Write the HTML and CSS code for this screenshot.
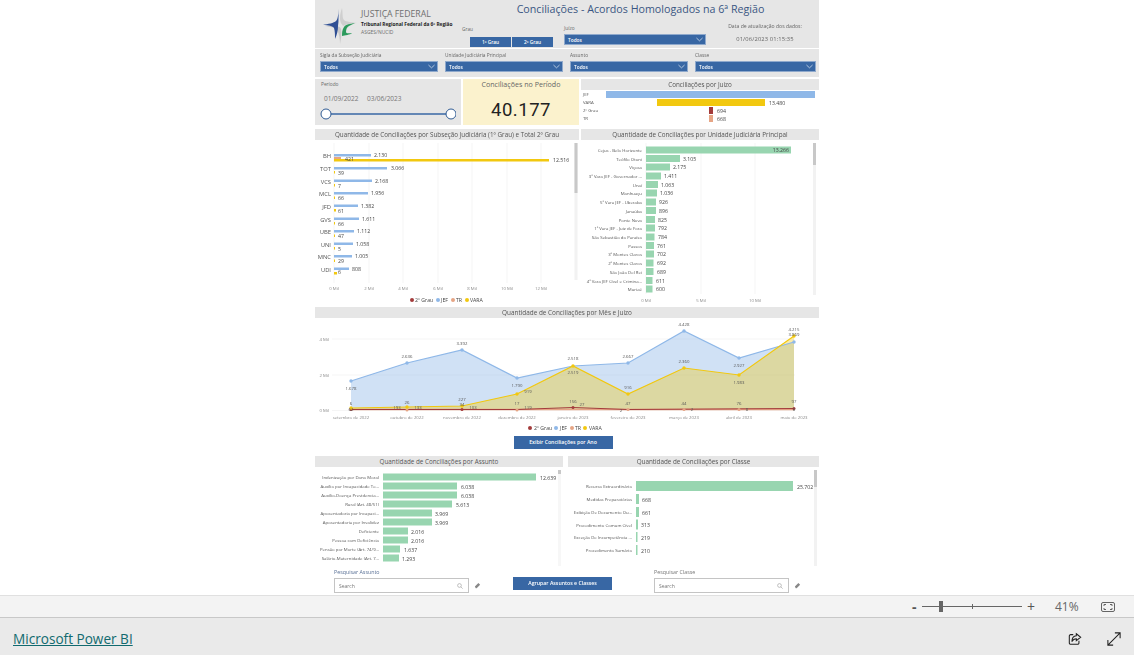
FILE: index.html
```html
<!DOCTYPE html>
<html lang="pt-BR">
<head>
<meta charset="utf-8">
<title>Conciliações - Power BI</title>
<link rel="stylesheet" href="styles.css">
</head>
<body>
<div class="page">
<main class="stage">
<div class="report">

<header class="hdr">
  <div class="brand">
    <svg class="logo" viewBox="323 8 36 36">
      <path fill="#cfcfcf" d="M342 8c1 5 0 10 2 12 2 2 8 2 13 3-6 1-11 1-14 3-1-2-3-3-3-8 0-4 1-7 2-10z"/>
      <path fill="#c8c8c8" d="M325 26c5 1 10 1 12 4 2 3 3 9 3 14 1-5 2-11 1-15-1-3-4-3-8-3z"/>
      <path fill="#2f4f94" d="M339 9c-1 6-1 10-3 12-2 2-8 3-13 4 5 0 10 1 11 3 1 3 1 7 1 11 2-4 3-9 3-13 1-5 0-11 1-17z"/>
      <path fill="#2c9a5c" d="M355 23c-5 1-9 1-11 4-2 3-2 6-2 9 3-1 8-1 10-3-2 0-6 1-6-1 0-3 1-5 3-6 2-1 4-2 6-3z"/>
    </svg>
    <div class="brand-text">
      <div class="brand-name">JUSTIÇA FEDERAL</div>
      <div class="brand-court">Tribunal Regional Federal da 6ª Região</div>
      <div class="brand-unit">ASGES/NUCID</div>
    </div>
  </div>
  <div class="hdr-main">
    <h1 class="title">Conciliações - Acordos Homologados na 6ª Região</h1>
    <div class="hdr-controls">
      <div class="grau">
        <div class="lbl">Grau</div>
        <div class="grau-btns"><span class="grau-btn">1º Grau</span><span class="grau-btn">2º Grau</span></div>
      </div>
      <div class="juizo">
        <div class="lbl">Juízo</div>
        <div class="sel"><span>Todos</span><svg class="chev" viewBox="0 0 8 5"><path d="M.5.8 4 4 7.5.8"/></svg></div>
      </div>
      <div class="update">
        <div class="update-lbl">Data de atualização dos dados:</div>
        <div class="update-val">01/06/2023 01:15:35</div>
      </div>
    </div>
  </div>
</header>

<section class="filters">
  <div class="flt"><div class="lbl">Sigla da Subseção Judiciária</div><div class="sel"><span>Todos</span><svg class="chev" viewBox="0 0 8 5"><path d="M.5.8 4 4 7.5.8"/></svg></div></div>
  <div class="flt"><div class="lbl">Unidade Judiciária Principal</div><div class="sel"><span>Todos</span><svg class="chev" viewBox="0 0 8 5"><path d="M.5.8 4 4 7.5.8"/></svg></div></div>
  <div class="flt"><div class="lbl">Assunto</div><div class="sel"><span>Todos</span><svg class="chev" viewBox="0 0 8 5"><path d="M.5.8 4 4 7.5.8"/></svg></div></div>
  <div class="flt"><div class="lbl">Classe</div><div class="sel"><span>Todos</span><svg class="chev" viewBox="0 0 8 5"><path d="M.5.8 4 4 7.5.8"/></svg></div></div>
</section>

<section class="kpis">
  <div class="period">
    <div class="lbl">Período</div>
    <div class="dates"><span class="date">01/09/2022</span><span class="date">03/06/2023</span></div>
    <svg class="slider" viewBox="320 106 136 14">
      <line x1="326" y1="113" x2="451" y2="113" stroke="#3867a4" stroke-width="1.6"/>
      <circle cx="326" cy="113" r="5" fill="#fff" stroke="#2f5b94" stroke-width="1"/>
      <circle cx="451" cy="113" r="5" fill="#fff" stroke="#2f5b94" stroke-width="1"/>
    </svg>
  </div>
  <div class="kpi">
    <div class="kpi-title">Conciliações no Período</div>
    <div class="kpi-value">40.177</div>
  </div>
  <div class="visual">
    <h2 class="vhead">Conciliações por Juízo</h2>
    <svg class="chart" viewBox="581 90 238 35">
      <text class="t4" x="583" y="96">JEF</text>
      <text class="t4" x="583" y="104">VARA</text>
      <text class="t4" x="583" y="112">2º Grau</text>
      <text class="t4" x="583" y="120">TR</text>
      <rect x="606" y="91" width="209" height="7" fill="#8fb8e8"/>
      <rect x="657" y="99" width="108" height="7" fill="#f2c80f"/>
      <rect x="709" y="107" width="4" height="7" fill="#a33b3b"/>
      <rect x="709" y="115" width="4" height="7" fill="#e6a585"/>
      <text class="t5" x="769" y="104.500">13.480</text>
      <text class="t5" x="717" y="112.500">694</text>
      <text class="t5" x="717" y="120.500">668</text>
    </svg>
  </div>
</section>

<section class="charts-a">
  <div class="visual">
    <h2 class="vhead">Quantidade de Conciliações por Subseção Judiciária (1º Grau) e Total 2º Grau</h2>
    <svg class="chart" viewBox="315 141 264 164">
      <g class="grid"><line x1="334" y1="143" x2="334" y2="283"/><line x1="369" y1="143" x2="369" y2="283"/><line x1="403" y1="143" x2="403" y2="283"/><line x1="438" y1="143" x2="438" y2="283"/><line x1="472" y1="143" x2="472" y2="283"/><line x1="507" y1="143" x2="507" y2="283"/><line x1="541" y1="143" x2="541" y2="283"/></g>
      <g fill="#8fb8e8">
        <rect x="334" y="154" width="37" height="2.500"/><rect x="334" y="167" width="53" height="2.500"/><rect x="334" y="179.500" width="38" height="2.500"/><rect x="334" y="192" width="34" height="2.500"/><rect x="334" y="204.500" width="24" height="2.500"/><rect x="334" y="217.500" width="25" height="2.500"/><rect x="334" y="230" width="20" height="2.500"/><rect x="334" y="242.500" width="19" height="2.500"/><rect x="334" y="255" width="18" height="2.500"/><rect x="334" y="267.500" width="15" height="2.500"/>
      </g>
      <rect x="334" y="157" width="7" height="2" fill="#e6a585"/>
      <g fill="#f2c80f">
        <rect x="334" y="159" width="215" height="2.500"/><rect x="334" y="171" width="1" height="2.500"/><rect x="334" y="184" width="1" height="2.500"/><rect x="334" y="196.500" width="1" height="2.500"/><rect x="334" y="209" width="2" height="2.500"/><rect x="334" y="222" width="1" height="2.500"/><rect x="334" y="234.500" width="1" height="2.500"/><rect x="334" y="247" width="1" height="2.500"/><rect x="334" y="259.500" width="1" height="2.500"/><rect x="334" y="272" width="3" height="2.500"/>
      </g>
      <g class="t6 r">
        <text x="331" y="158">BH</text><text x="331" y="171">TOT</text><text x="331" y="184">VCS</text><text x="331" y="196">MCL</text><text x="331" y="209">JFD</text><text x="331" y="222">GVS</text><text x="331" y="234">UBE</text><text x="331" y="247">UNI</text><text x="331" y="259">MNC</text><text x="331" y="272">UDI</text>
      </g>
      <g class="t5">
        <text x="374" y="157">2.130</text><text x="345" y="160.500">421</text><text x="553" y="162">12.516</text>
        <text x="391" y="170">3.066</text><text x="338" y="175">39</text>
        <text x="375" y="182.500">2.168</text><text x="338" y="187.500">7</text>
        <text x="371" y="195">1.956</text><text x="338" y="200">66</text>
        <text x="361" y="208">1.382</text><text x="338" y="212.500">61</text>
        <text x="362" y="220.500">1.611</text><text x="338" y="225.500">66</text>
        <text x="357" y="233">1.112</text><text x="338" y="238">47</text>
        <text x="356" y="245.500">1.058</text><text x="338" y="250.500">5</text>
        <text x="355" y="258">1.005</text><text x="338" y="263">29</text>
        <text x="352" y="270.500">808</text><text x="338" y="273.500">6</text>
      </g>
      <g class="t4 m fade">
        <text x="334" y="290">0 Mil</text><text x="369" y="290">2 Mil</text><text x="403" y="290">4 Mil</text><text x="438" y="290">6 Mil</text><text x="472" y="290">8 Mil</text><text x="507" y="290">10 Mil</text><text x="541" y="290">12 Mil</text>
      </g>
      <circle cx="412" cy="300" r="2" fill="#a33b3b"/><text class="t5" x="415" y="302">2º Grau</text>
      <circle cx="438" cy="300" r="2" fill="#8fb8e8"/><text class="t5" x="441" y="302">JEF</text>
      <circle cx="453" cy="300" r="2" fill="#e6a585"/><text class="t5" x="456" y="302">TR</text>
      <circle cx="467" cy="300" r="2" fill="#f2c80f"/><text class="t5" x="470" y="302">VARA</text>
      <rect x="574.500" y="143" width="3" height="137" fill="#f2f2f2"/>
      <rect x="574.500" y="143" width="3" height="50" fill="#c8c8c8"/>
    </svg>
  </div>
  <div class="visual">
    <h2 class="vhead">Quantidade de Conciliações por Unidade Judiciária Principal</h2>
    <svg class="chart" viewBox="581 141 238 164">
      <g class="grid"><line x1="646" y1="143" x2="646" y2="294"/><line x1="701" y1="143" x2="701" y2="294"/><line x1="755" y1="143" x2="755" y2="294"/></g>
      <g fill="#98d5b0">
        <rect x="646" y="146.500" width="145" height="7"/><rect x="646" y="155" width="34" height="7"/><rect x="646" y="163.500" width="24" height="7"/><rect x="646" y="172.500" width="15" height="7"/><rect x="646" y="181" width="12" height="7"/><rect x="646" y="189.500" width="11" height="7"/><rect x="646" y="198.500" width="10" height="7"/><rect x="646" y="207" width="10" height="7"/><rect x="646" y="216" width="9" height="7"/><rect x="646" y="224.500" width="9" height="7"/><rect x="646" y="233.500" width="8.500" height="7"/><rect x="646" y="242" width="8" height="7"/><rect x="646" y="250.500" width="8" height="7"/><rect x="646" y="259.500" width="7.500" height="7"/><rect x="646" y="268" width="7.500" height="7"/><rect x="646" y="277" width="6.500" height="7"/><rect x="646" y="285.500" width="6.500" height="7"/>
      </g>
      <g class="t4 r">
        <text x="642" y="152">Cejus - Belo Horizonte</text><text x="642" y="160.500">Teófilo Otoni</text><text x="642" y="169">Viçosa</text><text x="642" y="178">3ª Vara JEF - Governador ...</text><text x="642" y="186.500">Unaí</text><text x="642" y="195">Manhuaçu</text><text x="642" y="204">5ª Vara JEF - Uberaba</text><text x="642" y="212.500">Janaúba</text><text x="642" y="221.500">Ponte Nova</text><text x="642" y="230">1ª Vara JEF - Juiz de Fora</text><text x="642" y="239">São Sebastião do Paraíso</text><text x="642" y="247.500">Passos</text><text x="642" y="256">3ª Montes Claros</text><text x="642" y="265">2ª Montes Claros</text><text x="642" y="273.500">São João Del Rei</text><text x="642" y="282.500">4ª Vara JEF Cível e Crimina...</text><text x="642" y="291">Muriaé</text>
      </g>
      <g class="t5">
        <text class="r" x="789" y="152">13.266</text><text x="683" y="160.500">3.105</text><text x="673" y="169">2.175</text><text x="664" y="178">1.411</text><text x="661" y="186.500">1.063</text><text x="660" y="195">1.036</text><text x="659" y="204">926</text><text x="659" y="212.500">896</text><text x="658" y="221.500">825</text><text x="658" y="230">792</text><text x="658" y="239">784</text><text x="657" y="247.500">761</text><text x="657" y="256">702</text><text x="657" y="265">692</text><text x="657" y="273.500">689</text><text x="656" y="282.500">611</text><text x="656" y="291">600</text>
      </g>
      <g class="t4 m fade"><text x="646" y="302">0 Mil</text><text x="701" y="302">5 Mil</text><text x="755" y="302">10 Mil</text></g>
      <rect x="813" y="143" width="3" height="152" fill="#f2f2f2"/>
      <rect x="813" y="143" width="3" height="22" fill="#c8c8c8"/>
    </svg>
  </div>
</section>

<section class="monthly">
  <h2 class="vhead vhead-month">Quantidade de Conciliações por Mês e Juízo</h2>
  <svg class="chart" viewBox="315 318 504 117">
    <g class="grid"><line x1="332" y1="339" x2="795" y2="339"/><line x1="332" y1="375" x2="795" y2="375"/><line x1="332" y1="410.500" x2="795" y2="410.500"/></g>
    <path fill="#8fb8e8" fill-opacity=".42" d="M351 381 407 363 462 350 517 378 573 366 628 363 684 331 739 358 794 342V410H351z"/>
    <path fill="#f2c80f" fill-opacity=".36" d="M351 408 407 407 462 406 517 394 573 366 628 394 684 368 739 375 794 336V410H351z"/>
    <path fill="none" stroke="#8fb8e8" stroke-width="1.200" d="M351 381 407 363 462 350 517 378 573 366 628 363 684 331 739 358 794 342"/>
    <path fill="none" stroke="#e6a585" stroke-width="1.500" d="M351 409.500H794"/>
    <path fill="none" stroke="#a33b3b" stroke-width="1" d="M351 409.500 517 409.500 573 407.500 628 409.500 794 408.500"/>
    <path fill="none" stroke="#f2c80f" stroke-width="1.200" d="M351 408 407 407 462 406 517 394 573 366 628 394 684 368 739 375 794 336"/>
    <g fill="#8fb8e8"><circle cx="351" cy="381" r="1.700"/><circle cx="407" cy="363" r="1.700"/><circle cx="462" cy="350" r="1.700"/><circle cx="517" cy="378" r="1.700"/><circle cx="628" cy="363" r="1.700"/><circle cx="684" cy="331" r="1.700"/><circle cx="739" cy="358" r="1.700"/><circle cx="794" cy="342" r="1.700"/></g>
    <g fill="#e6a585"><circle cx="407" cy="410" r="1.500"/><circle cx="517" cy="410" r="1.500"/><circle cx="628" cy="409.500" r="1.500"/><circle cx="684" cy="409.500" r="1.500"/><circle cx="739" cy="409.500" r="1.500"/></g>
    <g fill="#a33b3b"><circle cx="351" cy="409.500" r="1.500"/><circle cx="462" cy="409.500" r="1.500"/><circle cx="573" cy="407.500" r="1.500"/><circle cx="794" cy="408.500" r="1.500"/></g>
    <g fill="#f2c80f"><circle cx="351" cy="408" r="1.700"/><circle cx="407" cy="407" r="1.700"/><circle cx="462" cy="406" r="1.700"/><circle cx="517" cy="394" r="1.700"/><circle cx="573" cy="366" r="1.700"/><circle cx="628" cy="394" r="1.700"/><circle cx="684" cy="368" r="1.700"/><circle cx="739" cy="375" r="1.700"/><circle cx="794" cy="336" r="1.700"/></g>
    <g class="t4 m">
      <text x="351" y="390">1.678</text><text x="407" y="358">2.636</text><text x="462" y="345">3.392</text><text x="517" y="387">1.790</text><text x="573" y="360">2.518</text><text x="628" y="358">2.667</text><text x="684" y="326">4.428</text><text x="739" y="367">2.927</text><text x="794" y="331">4.215</text>
      <text x="351" y="405">6</text><text x="407" y="404">26</text><text x="462" y="401">227</text><text x="517" y="405">17</text><text x="573" y="374">2.519</text><text x="628" y="389">916</text><text x="684" y="363">2.360</text><text x="739" y="384">1.983</text><text x="794" y="336">3.869</text>
      <text x="397" y="409">193</text><text x="418" y="409">133</text><text x="462" y="405.500">34</text><text x="473" y="409">103</text><text x="528" y="393">919</text><text x="528" y="409">119</text><text x="573" y="403">156</text><text x="582" y="406">27</text><text x="628" y="405">47</text><text x="684" y="405">44</text><text x="739" y="405">76</text><text x="794" y="403">97</text><text x="351" y="411">62</text><text x="621" y="412">2</text><text x="692" y="411">2</text><text x="747" y="411">8</text><text x="794" y="411">8</text>
    </g>
    <g class="t4 r fade"><text x="329" y="341">4 Mil</text><text x="329" y="377">2 Mil</text><text x="329" y="412">0 Mil</text></g>
    <g class="t4 m fade"><text x="351" y="418.500">setembro de 2022</text><text x="407" y="418.500">outubro de 2022</text><text x="462" y="418.500">novembro de 2022</text><text x="517" y="418.500">dezembro de 2022</text><text x="573" y="418.500">janeiro de 2023</text><text x="628" y="418.500">fevereiro de 2023</text><text x="684" y="418.500">março de 2023</text><text x="739" y="418.500">abril de 2023</text><text x="794" y="418.500">maio de 2023</text></g>
    <circle cx="530" cy="428" r="2" fill="#a33b3b"/><text class="t5" x="534" y="430">2º Grau</text>
    <circle cx="556" cy="428" r="2" fill="#8fb8e8"/><text class="t5" x="560" y="430">JEF</text>
    <circle cx="572" cy="428" r="2" fill="#e6a585"/><text class="t5" x="575" y="430">TR</text>
    <circle cx="585" cy="428" r="2" fill="#f2c80f"/><text class="t5" x="589" y="430">VARA</text>
  </svg>
  <div class="btn-row"><span class="btn">Exibir Conciliações por Ano</span></div>
</section>

<section class="charts-b">
  <div class="visual">
    <h2 class="vhead">Quantidade de Conciliações por Assunto</h2>
    <svg class="chart" viewBox="315 467 248 100">
      <g fill="#98d5b0"><rect x="383" y="473.500" width="153" height="7"/><rect x="383" y="482.500" width="74" height="7"/><rect x="383" y="491.500" width="74" height="7"/><rect x="383" y="500.500" width="69" height="7"/><rect x="383" y="509.500" width="49" height="7"/><rect x="383" y="518.500" width="49" height="7"/><rect x="383" y="527.500" width="25" height="7"/><rect x="383" y="536.500" width="25" height="7"/><rect x="383" y="545.500" width="17" height="7"/><rect x="383" y="554.500" width="16" height="7"/></g>
      <g class="t4 r"><text x="379" y="479">Indenização por Dano Moral</text><text x="379" y="488">Auxílio por Incapacidade Te...</text><text x="379" y="497">Auxílio-Doença Previdencia...</text><text x="379" y="506">Rural (Art. 48/51)</text><text x="379" y="515">Aposentadoria por Incapaci...</text><text x="379" y="524">Aposentadoria por Invalidez</text><text x="379" y="533">Deficiente</text><text x="379" y="542">Pessoa com Deficiência</text><text x="379" y="551">Pensão por Morte (Art. 74/9...</text><text x="379" y="560">Salário-Maternidade (Art. 7...</text></g>
      <g class="t5"><text x="540" y="479.500">12.639</text><text x="461" y="488.500">6.038</text><text x="461" y="497.500">6.038</text><text x="456" y="506.500">5.613</text><text x="435" y="515.500">3.969</text><text x="435" y="524.500">3.969</text><text x="411" y="533.500">2.016</text><text x="411" y="542.500">2.016</text><text x="404" y="551.500">1.637</text><text x="402" y="560.500">1.293</text></g>
      <rect x="558" y="470" width="3" height="96" fill="#f7f7f7"/>
      <rect x="558" y="470" width="3" height="4" fill="#c8c8c8"/>
    </svg>
  </div>
  <div class="visual">
    <h2 class="vhead">Quantidade de Conciliações por Classe</h2>
    <svg class="chart" viewBox="568 467 251 100">
      <g fill="#98d5b0"><rect x="636" y="481" width="157" height="10"/><rect x="636" y="494" width="3" height="10"/><rect x="636" y="507" width="3" height="10"/><rect x="636" y="519.500" width="2" height="10"/><rect x="636" y="532" width="1.500" height="10"/><rect x="636" y="545" width="1.500" height="10"/></g>
      <g class="t4 r"><text x="632" y="488">Recurso Extraordinário</text><text x="632" y="501">Medidas Preparatórias</text><text x="632" y="514">Exibição De Documento Ou...</text><text x="632" y="526.500">Procedimento Comum Cível</text><text x="632" y="539">Exceção De Incompetência ...</text><text x="632" y="552">Procedimento Sumário</text></g>
      <g class="t5"><text x="797" y="488.500">25.702</text><text x="642" y="501.500">668</text><text x="642" y="514.500">661</text><text x="641" y="527">313</text><text x="641" y="539.500">219</text><text x="641" y="552.500">210</text></g>
      <rect x="814" y="470" width="3" height="96" fill="#f2f2f2"/>
      <rect x="814" y="470" width="3" height="17" fill="#c8c8c8"/>
    </svg>
  </div>
</section>

<section class="searches">
  <div class="srch">
    <div class="srch-lbl">Pesquisar Assunto</div>
    <div class="srch-row">
      <div class="srch-box"><span>Search</span><svg class="mag" viewBox="0 0 8 8"><circle cx="3.300" cy="3.300" r="2.500"/><path d="M5.200 5.200 7.500 7.500"/></svg></div>
      <svg class="eraser" viewBox="0 0 8 8"><path d="M1 5 5 1l2 2-4 4H2z"/></svg>
    </div>
  </div>
  <span class="btn btn-mid">Agrupar Assuntos e Classes</span>
  <div class="srch srch-right">
    <div class="srch-lbl">Pesquisar Classe</div>
    <div class="srch-row">
      <div class="srch-box"><span>Search</span><svg class="mag" viewBox="0 0 8 8"><circle cx="3.300" cy="3.300" r="2.500"/><path d="M5.200 5.200 7.500 7.500"/></svg></div>
      <svg class="eraser" viewBox="0 0 8 8"><path d="M1 5 5 1l2 2-4 4H2z"/></svg>
    </div>
  </div>
</section>

</div>
</main>

<div class="zoombar">
  <span class="z-minus">-</span>
  <div class="z-track"><span class="z-tick"></span><span class="z-thumb"></span></div>
  <span class="z-plus">+</span>
  <span class="z-pct">41%</span>
  <svg class="z-fit" viewBox="0 0 14 10"><rect x=".5" y=".5" width="13" height="9" rx="1.500"/><path d="M3 4V2.500H5M9 2.500H11V4M11 6V7.500H9M5 7.500H3V6"/></svg>
</div>

<footer class="foot">
  <a class="foot-link" href="#">Microsoft Power BI</a>
  <div class="foot-icons">
    <svg class="ficon" viewBox="0 0 16 16"><path d="M6 3H3a1.500 1.500 0 0 0-1.500 1.500v8A1.500 1.500 0 0 0 3 14h8a1.500 1.500 0 0 0 1.500-1.500V10"/><path d="M9.500 2 14.500 6 9.500 10V7.800C7 7.800 5.500 9 4.500 11c0-4 2-6.500 5-6.800z"/></svg>
    <svg class="ficon" viewBox="0 0 16 16"><path d="M15 1 1 15M9 1h6v6M1 9v6h6"/></svg>
  </div>
</footer>
</div>
</body>
</html>
```
FILE: styles.css
```css
* { box-sizing: border-box; }
html, body { margin: 0; padding: 0; }
body { font-family: "Open Sans", "Liberation Sans", sans-serif; color: #555; background: #fff; }
.page { width: 1134px; height: 655px; display: flex; flex-direction: column; overflow: hidden; }
.stage { height: 595px; flex: none; overflow: hidden; background: #fff; }
.report { width: 504px; height: 595px; margin: 0 auto; display: flex; flex-direction: column; overflow: hidden; filter: blur(.3px); }

.hdr { height: 48px; flex: none; display: flex; background: #e6e6e6; }
.brand { width: 147px; flex: none; display: flex; padding: 8px 0 0 8px; gap: 2px; }
.logo { width: 36px; height: 36px; flex: none; }
.brand-text { padding-top: 1px; }
.brand-name { font-size: 8.700px; line-height: 11px; color: #6f6f6f; white-space: nowrap; }
.brand-court { font-size: 4.800px; line-height: 8px; font-weight: 700; color: #222; white-space: nowrap; }
.brand-unit { font-size: 5px; line-height: 8px; color: #6f6f6f; }
.hdr-main { flex: 1; display: flex; flex-direction: column; min-width: 0; }
.title { margin: 0; height: 20px; text-align: center; font-size: 10.700px; line-height: 19px; font-weight: 400; color: #3a5683; white-space: nowrap; }
.hdr-controls { display: flex; padding-top: 6px; }
.lbl { font-size: 4.800px; line-height: 7px; color: #666; white-space: nowrap; }
.grau { width: 101px; flex: none; }
.grau-btns { display: flex; gap: 1px; margin: 4px 0 0 8px; }
.grau-btn { width: 41px; height: 10px; background: #3867a4; color: #fff; font-size: 4.800px; line-height: 10px; font-weight: 600; text-align: center; }
.juizo { width: 143px; flex: none; margin-top: -1px; padding-left: 1px; }
.sel { height: 11px; margin-top: 2px; padding: 0 2px 0 3px; background: #3867a4; border: 1px solid #8fa9cc; color: #fff; display: flex; align-items: center; justify-content: space-between; font-size: 4.800px; font-weight: 600; }
.chev { width: 7px; height: 5px; fill: none; stroke: #e8eef6; stroke-width: .8; }
.update { flex: 1; text-align: center; padding-left: 5px; }
.update-lbl { font-size: 5.100px; line-height: 7px; color: #666; margin-top: -3px; }
.update-val { font-size: 5.800px; line-height: 8px; color: #666; margin-top: 5px; letter-spacing: .12px; }

.filters { height: 28px; flex: none; margin-top: 1px; padding: 3px 0 0 5px; background: #e6e6e6; display: grid; grid-template-columns: 118px 118px 118px 121px; column-gap: 7px; }

.kpis { height: 46px; flex: none; margin-top: 2px; display: grid; grid-template-columns: 146px 116px 238px; column-gap: 2px; }
.period { background: #e6e6e6; padding: 2px 0 0 6px; display: flex; flex-direction: column; }
.dates { display: flex; gap: 9px; margin: 6px 0 0 3px; }
.date { font-size: 6.500px; line-height: 10px; color: #777; width: 34px; white-space: nowrap; }
.slider { width: 136px; height: 14px; margin: 3px 0 0 -1px; flex: none; }
.kpi { background: #fbf2cd; text-align: center; }
.kpi-title { font-size: 7.100px; line-height: 11px; color: #666; }
.kpi-value { font-family: Roboto, "Open Sans", sans-serif; font-size: 18.500px; line-height: 24px; color: #222; margin-top: 8px; letter-spacing: .5px; }

.visual { display: flex; flex-direction: column; min-width: 0; }
.vhead { margin: 0; height: 11px; flex: none; background: #e6e6e6; text-align: center; font-size: 6.300px; line-height: 11px; font-weight: 400; color: #555; white-space: nowrap; overflow: hidden; }
.vhead-month { font-size: 6.400px; }
.chart { display: block; flex: none; width: 100%; }
.kpis .chart { height: 35px; }
.charts-a .chart { height: 164px; margin-top: 1px; }
.charts-b .chart { height: 100px; }

.charts-a { height: 177px; flex: none; margin-top: 4px; display: grid; grid-template-columns: 264px 238px; column-gap: 2px; }
.monthly { height: 146px; flex: none; margin-top: 1px; }
.monthly .chart { height: 117px; }
.btn-row { display: flex; justify-content: center; padding-right: 8px; margin-top: 1px; }
.btn { width: 99px; height: 13px; background: #3867a4; color: #fff; font-size: 5.200px; line-height: 13px; font-weight: 600; text-align: center; display: block; white-space: nowrap; }
.charts-b { height: 111px; flex: none; margin-top: 3px; display: grid; grid-template-columns: 248px 251px; column-gap: 5px; }

.searches { flex: 1; display: grid; grid-template-columns: 179px 99px 1fr; padding: 2px 0 0 19px; }
.srch-lbl { font-size: 5.300px; line-height: 7px; color: #5a7196; }
.srch-right .srch-lbl { color: #777; }
.srch-row { display: flex; align-items: center; margin-top: 2px; }
.srch-box { width: 135px; height: 15px; background: #fff; border: 1px solid #c4c4c4; padding: 0 5px 0 4px; display: flex; align-items: center; justify-content: space-between; font-size: 5px; color: #777; }
.mag { width: 6px; height: 6px; fill: none; stroke: #999; stroke-width: .8; }
.eraser { width: 7px; height: 7px; margin-left: 5px; fill: #888; }
.btn-mid { margin-top: 8px; }
.srch-right { padding-left: 42px; }

.zoombar { height: 23px; flex: none; background: #f3f3f3; border-top: 1px solid #e0e0e0; border-bottom: 1px solid #c8c8c8; display: flex; align-items: center; padding-left: 912px; color: #555; }
.z-minus { width: 10px; font-size: 14px; font-weight: 700; line-height: 20px; }
.z-track { width: 100px; height: 1px; background: #666; position: relative; }
.z-tick { position: absolute; left: 50px; top: -2px; width: 1px; height: 5px; background: #666; }
.z-thumb { position: absolute; left: 17px; top: -5px; width: 4px; height: 11px; background: #666; }
.z-plus { margin-left: 5px; width: 20px; font-size: 14px; line-height: 20px; }
.z-pct { width: 46px; font-size: 12px; color: #666; margin-left: 8px; }
.z-fit { width: 14px; height: 10px; fill: none; stroke: #555; stroke-width: .9; }

.foot { flex: 1; background: #eaeaea; display: flex; align-items: center; justify-content: space-between; padding: 4px 13px 0; }
.foot-link { font-size: 13.600px; color: #116a6f; text-decoration: underline; }
.foot-icons { display: flex; gap: 25px; }
.ficon { width: 14px; height: 14px; fill: none; stroke: #222; stroke-width: 1.200; }

svg text { font-family: "Open Sans", "Liberation Sans", sans-serif; fill: #555; }
.t4, .t4 text { font-size: 4.300px; }
.t5, .t5 text { font-size: 5.200px; fill: #444; }
.t6, .t6 text { font-size: 5.800px; }
.r, .r text { text-anchor: end; }
.m, .m text { text-anchor: middle; }
.fade text { fill: #888; }
.grid line { stroke: #f2f2f2; stroke-width: .8; }
```
